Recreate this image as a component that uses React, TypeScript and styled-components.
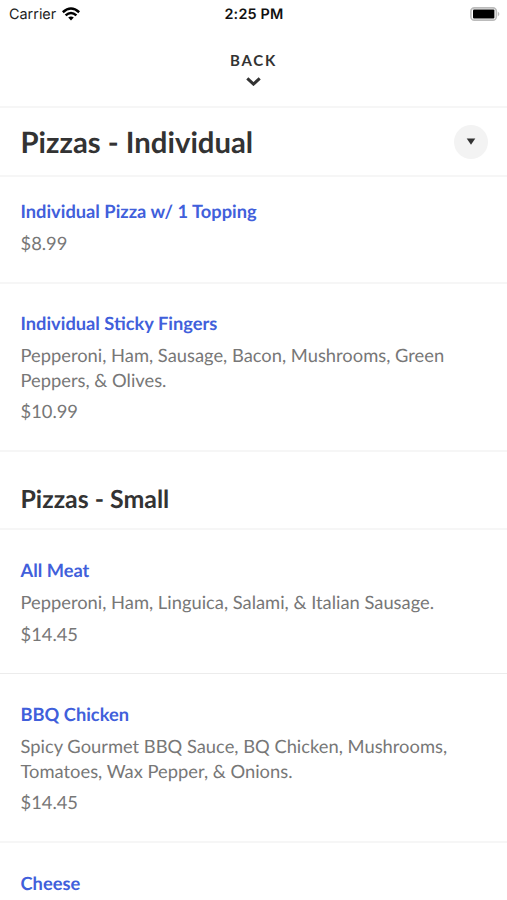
import React from "react";
import styled, { createGlobalStyle } from "styled-components";

const Global = createGlobalStyle`
  * { box-sizing: border-box; }
  html, body { margin: 0; background: #fff; overflow: hidden; }
  h1, h2, h3, p { margin: 0; }
`;
const Screen = styled.main`
  width: 507px; height: 900px; overflow: hidden; background: #fff;
  display: flex; flex-direction: column;
  font-family: Lato, sans-serif; color: #777;
  text-rendering: geometricPrecision;
`;
const StatusBar = styled.header`
  flex: none; height: 28px; padding: 0 7px 0 9px;
  display: grid; grid-template-columns: 1fr auto 1fr; align-items: center;
  font: 400 14.4px/26px Inter, sans-serif; color: #222;
`;
const Carrier = styled.div`
  display: flex; align-items: center; gap: 6px;
  span { padding-top: 2px; }
`;
const Clock = styled.div`padding-top: 2px; font-weight: 600; letter-spacing: 0.2px; color: #111; margin-right: 1px;`;
const Battery = styled.div`display: flex; justify-content: flex-end;`;
const BackButton = styled.button`
  flex: none; height: 80px; padding: 23px 0 0; border: 0; border-bottom: 2px solid #f6f6f6;
  background: none; display: flex; flex-direction: column; align-items: center; gap: 8px;
  font: 700 15px/18px Lato, sans-serif; letter-spacing: 1.7px; color: #333;
  svg { margin-right: 1px; }
`;
const TitleBar = styled.section`
  flex: none; height: 69px; padding: 0 19.5px 0 20.5px; border-bottom: 2px solid #f6f6f6;
  display: flex; align-items: center; justify-content: space-between;
`;
const Title = styled.h1`padding-top: 2px; font: 700 29.3px/34px Lato, sans-serif; color: #333;`;
const RoundButton = styled.button`
  width: 34px; height: 34px; padding: 0; border: 0; border-radius: 50%;
  background: #f3f3f3; display: grid; place-items: center;
`;
const SectionTitle = styled.h2`
  flex: none; height: 78px; padding: 32px 20.5px 0; border-bottom: 2px solid #f6f6f6;
  font: 700 24.9px/31px Lato, sans-serif; color: #333;
`;
const Item = styled.article<{ $height: number; $top?: number; $thin?: boolean }>`
  flex: none; height: ${(p) => p.$height}px; padding: ${(p) => p.$top ?? 28}px 20.5px 0;
  border-bottom: ${(p) => (p.$thin ? "1px solid #ececec" : "2px solid #f6f6f6")};
  font-size: 18.33px; line-height: 24.5px;
`;
const Name = styled.h3`font: 700 18.3px/25px Lato, sans-serif; color: #415fdb;`;
const Line = styled.p<{ $gap?: boolean }>`margin-top: ${(p) => (p.$gap ? 7 : 0)}px; white-space: nowrap;`;

type Dish = { name: string; lines: string[]; price?: string; height: number; top?: number; thin?: boolean };
const individual: Dish[] = [
  { name: "Individual Pizza w/ 1 Topping", lines: [], price: "$8.99", height: 107, top: 22 },
  { name: "Individual Sticky Fingers", lines: ["Pepperoni, Ham, Sausage, Bacon, Mushrooms, Green", "Peppers, & Olives."], price: "$10.99", height: 168, top: 27.4 },
];
const small: Dish[] = [
  { name: "All Meat", lines: ["Pepperoni, Ham, Linguica, Salami, & Italian Sausage."], price: "$14.45", height: 144, thin: true },
  { name: "BBQ Chicken", lines: ["Spicy Gourmet BBQ Sauce, BQ Chicken, Mushrooms,", "Tomatoes, Wax Pepper, & Onions."], price: "$14.45", height: 169 },
  { name: "Cheese", lines: [], height: 107 },
];
const DishRow = ({ dish }: { dish: Dish }) => (
  <Item $height={dish.height} $top={dish.top} $thin={dish.thin}>
    <Name>{dish.name}</Name>
    {dish.lines.map((l, i) => <Line key={l} $gap={i === 0}>{l}</Line>)}
    {dish.price && <Line $gap>{dish.price}</Line>}
  </Item>
);

export default function App() {
  return (
    <Screen>
      <Global />
      <StatusBar>
        <Carrier>
          <span>Carrier</span>
          <svg width="18" height="14" viewBox="0 0 18 14" fill="none" stroke="#000" strokeWidth="2.6">
            <path d="M.8 5.2Q9-2.2 17.2 5.2M3.6 8.4q5.4-4.8 10.8 0" />
            <path d="M6.2 10.6q2.8-2.3 5.6 0L9 13.4z" fill="#000" stroke="none" />
          </svg>
        </Carrier>
        <Clock>2:25 PM</Clock>
        <Battery>
          <svg width="30" height="14" viewBox="0 0 30 14">
            <rect x=".9" y=".9" width="25.4" height="12.2" rx="3.4" fill="none" stroke="#bbb" strokeWidth="1.6" />
            <rect x="3" y="2.6" width="21.4" height="8.8" rx="1" />
            <path d="M27.8 4.6q3.2 2.4 0 4.8z" fill="#bbb" />
          </svg>
        </Battery>
      </StatusBar>
      <BackButton>
        <span>BACK</span>
        <svg width="15" height="9" viewBox="0 0 15 9" fill="none" stroke="#333" strokeWidth="3"><path d="M1.3 1.3 7.5 7.1l6.2-5.8" /></svg>
      </BackButton>
      <TitleBar>
        <Title>Pizzas - Individual</Title>
        <RoundButton aria-label="Choose section">
          <svg width="10" height="7" viewBox="0 0 10 7"><path d="M.7.5h8.6L5 6.7z" fill="#333" /></svg>
        </RoundButton>
      </TitleBar>
      {individual.map((d) => <DishRow key={d.name} dish={d} />)}
      <SectionTitle>Pizzas - Small</SectionTitle>
      {small.map((d) => <DishRow key={d.name} dish={d} />)}
    </Screen>
  );
}
